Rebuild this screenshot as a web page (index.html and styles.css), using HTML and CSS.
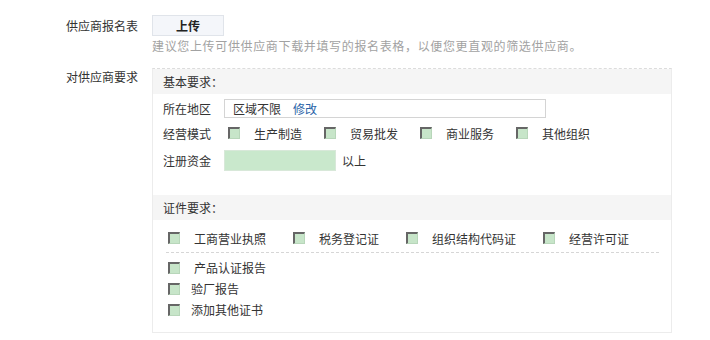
FILE: index.html
```html
<!DOCTYPE html>
<html lang="zh-CN">

<head>
    <meta charset="UTF-8">
    <title>供应商要求</title>
    <link rel="stylesheet" href="styles.css">
</head>

<body>
    <div class="form">
        <div class="form-row">
            <div class="form-label">供应商报名表</div>
            <div class="form-field">
                <button class="upload-btn">上传</button>
                <div class="hint">建议您上传可供供应商下载并填写的报名表格，以便您更直观的筛选供应商。</div>
            </div>
        </div>

        <div class="form-row req-row">
            <div class="form-label req-label">对供应商要求</div>
            <div class="req-box">
                <div class="req-head">基本要求：</div>
                <div class="basic">
                    <div class="basic-row area-row">
                        <span class="basic-label">所在地区</span>
                        <div class="area-input">区域不限<a class="edit-link">修改</a></div>
                    </div>
                    <div class="basic-row mode-row">
                        <span class="basic-label">经营模式</span>
                        <label class="check"><span class="box"></span>生产制造</label>
                        <label class="check"><span class="box"></span>贸易批发</label>
                        <label class="check"><span class="box"></span>商业服务</label>
                        <label class="check"><span class="box"></span>其他组织</label>
                    </div>
                    <div class="basic-row fund-row">
                        <span class="basic-label">注册资金</span>
                        <div class="fund-input"></div>
                        <span class="fund-unit">以上</span>
                    </div>
                </div>

                <div class="req-head cert-head">证件要求：</div>
                <div class="cert">
                    <div class="cert-main">
                        <label class="check"><span class="box"></span>工商营业执照</label>
                        <label class="check"><span class="box"></span>税务登记证</label>
                        <label class="check"><span class="box"></span>组织结构代码证</label>
                        <label class="check"><span class="box"></span>经营许可证</label>
                    </div>
                    <div class="cert-list">
                        <label class="check wide"><span class="box"></span>产品认证报告</label>
                        <label class="check"><span class="box"></span>验厂报告</label>
                        <label class="check"><span class="box"></span>添加其他证书</label>
                    </div>
                </div>
            </div>
        </div>
    </div>
</body>

</html>
```

FILE: styles.css
```css
body {
    margin: 0;
    font-family: "Noto Sans CJK SC", "Liberation Sans", sans-serif;
    font-size: 12px;
    color: #333;
    background-color: white;
}

.form {
    padding: 15px 0 0 66px;
}

.form-row {
    display: flex;
}

.form-label {
    width: 86px;
    flex-shrink: 0;
    line-height: 21px;
    color: #333;
}

.form-field {
    display: flex;
    flex-direction: column;
    align-items: flex-start;
}

.upload-btn {
    width: 72px;
    height: 21px;
    padding: 0;
    font-family: inherit;
    font-size: 12px;
    font-weight: bold;
    color: #222;
    background-color: #f4f6fa;
    border: 1px solid #e0e4ea;
}

.hint {
    margin-top: 2px;
    line-height: 16px;
    color: #a2a2a2;
    letter-spacing: 0.65px;
}

.req-row {
    margin-top: 14px;
}

.req-label {
    line-height: 18px;
}

.req-box {
    width: 518px;
    border: 1px solid #ececec;
    border-top: 1px dashed #dcdcdc;
}

.req-head {
    height: 25px;
    line-height: 25px;
    padding-left: 10px;
    background-color: #f5f5f5;
    color: #333;
}

.basic {
    padding: 5px 10px 24px;
}

.basic-row {
    display: flex;
    align-items: center;
}

.basic-label {
    width: 61px;
    flex-shrink: 0;
}

.area-row {
    height: 19px;
}

.area-input {
    width: 312px;
    height: 17px;
    line-height: 17px;
    padding-left: 8px;
    border: 1px solid #d4d4d4;
}

.edit-link {
    margin-left: 12px;
    color: #2a64a8;
}

.mode-row {
    height: 30px;
}

.mode-row .check {
    margin-left: 4px;
    margin-right: 18px;
}

.fund-row {
    margin-top: 2px;
    height: 21px;
}

.fund-input {
    width: 110px;
    height: 19px;
    background-color: #c9e8cc;
    border: 1px solid #d8e8d9;
}

.fund-unit {
    margin-left: 6px;
}

.check {
    display: inline-flex;
    align-items: center;
    white-space: nowrap;
}

.box {
    display: inline-block;
    width: 9px;
    height: 9px;
    margin-right: 14px;
    background-color: #c7e5c9;
    border-top: 2px solid #666;
    border-left: 2px solid #666;
    border-right: 1px solid #b8d6ba;
    border-bottom: 1px solid #b8d6ba;
}

.cert {
    padding: 10px 12px 12px 15px;
}

.cert-main {
    display: flex;
    height: 16px;
    align-items: center;
    padding-bottom: 6px;
    border-bottom: 1px dashed #d6d6d6;
    margin-left: -2px;
    padding-left: 2px;
}

.cert-main .check {
    margin-right: 27px;
}

.cert-list {
    display: flex;
    flex-direction: column;
    padding-top: 4px;
}

.cert-list .check {
    height: 21px;
}

.cert-list .box {
    margin-right: 11px;
}

.cert-list .wide .box {
    margin-right: 14px;
}
```
